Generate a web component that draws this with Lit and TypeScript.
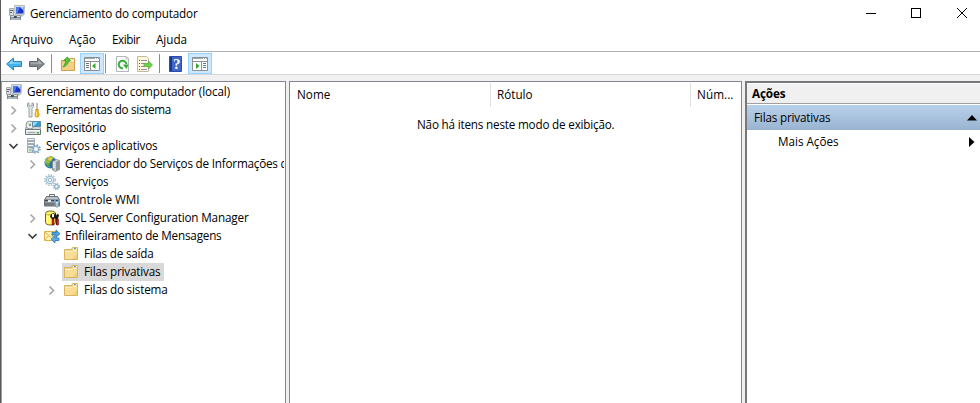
import { LitElement, html, css, svg, nothing } from "lit";
import { customElement, property } from "lit/decorators.js";

const folder = svg`<path d="M1.500 3.500h7l1-2h5v12h-13z" fill="#f4d486" stroke="#d9b360"/><path d="M10 2.500h4" stroke="#fff6dc"/><path d="M11 2.500h1" stroke="#4b94cf"/><path d="M12 2.500h1" stroke="#d98a3a"/><path d="M2 5.500h7l1-1h4V13H2z" fill="#f8dd96"/><path d="M2 5.500h7l1-1h4" stroke="#fff1c4"/><path d="M9 13l5-5v5z" fill="#f3cf7c"/>`;
const computer = svg`<path d="M5.500 .5h10l-.5 9.500H6z" fill="#d9dcde" stroke="#b3b8bc"/><path d="M7 2h7.500v6.500H7z" fill="#1b35c8"/><path d="M7 2h4L8.500 8.500H7z" fill="#4a78ee"/><path d="M11 2h3.500v3.500z" fill="#a9cbff"/><path d="M.5 3.500h4v7h-4z" fill="#dadde0" stroke="#a4aaae"/><path d="M1 5.500h3M1 7.500h2" stroke="#667"/><path d="M9 10h4l1 1.500H8z" fill="#aeb3b6"/><path d="M1 10.500h11V15H1z" fill="#7b858b"/><path d="M2 11.500h3M8 11.500h3M2 14h9" stroke="#dfe4e6"/><path d="M5 11h2.500v2H5z" fill="#344958"/>`;
const icons: Record<string, unknown> = {
  computer,
  tools: svg`<path d="M2.500 1.500v3l1.500 2v8.500h3V6.500l1.500-2v-3L7 .8V4H4V.8z" fill="#e4e7e9" stroke="#8d9599" stroke-width=".9"/><path d="M12 1v7" stroke="#999" stroke-width="2"/><path d="M12 1v6" stroke="#e8e8e8"/><path d="M10.500 7.500h3l-.5 2.500 1 1v3l-1 1h-2l-1-1v-3l1-1z" fill="#f8bb20" stroke="#cf9520" stroke-width=".8"/><path d="M11.500 10v4" stroke="#ffeb72"/>`,
  storage: svg`<path d="M.5 8l2-4h10l3 4v3H.5z" fill="#d3d7d9" stroke="#a0a6aa"/><circle cx="5" cy="5" r="4" fill="#eef0f2" stroke="#92999d"/><path d="M2 3l3 2 1-3" stroke="#bfe0a8"/><circle cx="5" cy="5" r="1.200" fill="#85999e"/><path d="M7.500 1.500h8v5h-8z" fill="#2f9fd6" stroke="#5f8ba0"/><path d="M8 2h5L9 6H8z" fill="#8fdcf8"/><path d="M.5 9.500h15v5H.500z" fill="#dfe2e3" stroke="#6f7579"/><path d="M1 10.500h14" stroke="#fff"/><path d="M3 12.500h7" stroke="#a4aaad"/><path d="M12 12h2v1.500h-2z" fill="#29bd3b"/>`,
  server: svg`<path d="M2.500 .5h7v14h-7z" fill="#d8dee2" stroke="#a5aeb3"/><path d="M3 3h6M3 6h6M3 9h5" stroke="#697b87"/><path d="M3 1.500h6M3 4.500h6M3 7.500h5" stroke="#f5f7f8"/><path d="M4 12h2" stroke="#4ac150"/><circle cx="11" cy="11" r="4" stroke="#7f9fb8" stroke-width="1.600" stroke-dasharray="1.600 1.540"/><circle cx="11" cy="11" r="2.900" fill="#dbe8f2" stroke="#82a6c2"/><circle cx="11" cy="11" r="1.200" fill="#fff"/>`,
  web: svg`<circle cx="6.500" cy="6.500" r="6" fill="#2874b6"/><path d="M1 4l3-3 4-1 2 2-3 2-1 3-3 2-2-2z" fill="#8dbd43"/><path d="M5 1l4 1-2 3-3-1z" fill="#f1c343"/><path d="M2 7l3 1 1 4-3-2z" fill="#56a83d"/><path d="M8.500 5.500l4-2 3 1v9l-4 2-3-1.500z" fill="#c8cdd0" stroke="#7b858a" stroke-width=".8"/><path d="M12 6l3-1.200v8.700l-3 1.500z" fill="#8b959b"/><path d="M9 7l2 .8M9 9l2 .8M9 11l2 .8" stroke="#f5f7f8"/><path d="M9 12.500h1.500v1H9z" fill="#45ce44"/>`,
  gears: svg`<circle cx="6" cy="6" r="5.200" stroke="#a9c0cf" stroke-width="1.600" stroke-dasharray="1.500 1.230"/><circle cx="6" cy="6" r="3.700" fill="#e3eef6" stroke="#a1bfd1" stroke-width="1.200"/><circle cx="6" cy="6" r="1.700" fill="#fff" stroke="#9cb9cb"/><circle cx="12.500" cy="12.500" r="2.800" stroke="#719ab5" stroke-width="1.300" stroke-dasharray="1.200 1"/><circle cx="12.500" cy="12.500" r="2" fill="#dceaf3" stroke="#7ca8c6"/><circle cx="12.500" cy="12.500" r=".8" fill="#fff"/>`,
  wmi: svg`<path d="M5.500 4.500V2.500h5v2" stroke="#61666c"/><path d="M.5 8l2-3.500h11l2 3.500v6H.500z" fill="#8d959c" stroke="#666e75"/><path d="M2.500 5.500h11M2 6.500h12" stroke="#bcc3c8"/><path d="M1 8.500h14" stroke="#3f474e"/><path d="M4 8h3v2H4z" fill="#e4e8ea"/><path d="M1 11h9v2.500H1z" fill="#6f7980"/><path d="M10.500 7v3l1.500 1v4h2v-4l1.500-1V7l-1 .5v2h-3v-2z" fill="#dceaf6" stroke="#6f97bf" stroke-width=".9"/>`,
  sql: svg`<path d="M1.500 3.500c0-3.300 10-3.300 10 0v9c0 3.300-10 3.300-10 0z" fill="#fff36d" stroke="#6c6315"/><path d="M2 3.500c1 2 8 2 9 0" stroke="#b4a51d"/><path d="M3.500 6v7M5.500 6v8M7.500 6v8" stroke="#fffed1"/><path d="M7 4l3-1 1 2v3l-1 1v6H8V9L6 7z" fill="#191919"/><path d="M8.500 4v3h1V4" stroke="#f5f5f5"/><path d="M12 2.500v3l2-2 1 2-1 3v6h-2V9l-2-2 1-3z" fill="#181818"/><path d="M8 9h2v6H8zM12.500 9h2v6h-2z" fill="#e32218" stroke="#500" stroke-width=".5"/>`,
  queue: svg`<path d="M.5 3.500h12v9H.500z" fill="#fff1ae" stroke="#e0b249"/><path d="M1 4l5.500 5L12 4M1 12l3.500-4.500M12 12L8.500 7.500" stroke="#ddb25a"/><path d="M8 4.500h4V2l4 3.700-4 3.500V7H8z" fill="#4ba3e4" stroke="#2674b1" stroke-width=".8"/><path d="M15 10h-4V7.500L7 11.200 11 15v-2.500h4z" fill="#5cb0ea" stroke="#2674b1" stroke-width=".8"/>`,
  folder,
  back: svg`<path d="M.6 8L7.500 2v3.500h8v5h-8V14z" fill="#45b3ec" stroke="#2a86bf"/><path d="M2.500 7.700L6.500 4.200v2.300h8v1z" fill="#9cdcf9"/>`,
  forward: svg`<path d="M15.400 8L8.500 2v3.500h-8v5h8V14z" fill="#85898c" stroke="#606467"/><path d="M13.500 7.700L9.500 4.200v2.300h-8v1z" fill="#b7babc"/>`,
  up: svg`<path d="M1.500 4.500h7l1-2h5v12h-13z" fill="#efc873" stroke="#cf9f50"/><path d="M10 3.500h4v2h-4z" fill="#fff3d3"/><path d="M2 6.500h12v7.500H2z" fill="#f3d083"/><path d="M3 11c3.500-1 5-3 5.500-6h2L7.500 1 3.500 4.500h2.300c-.3 2.500-1.300 4.500-2.800 6.500z" fill="#53c637" stroke="#3b9b2f" stroke-width=".8"/>`,
  leftPane: svg`<path d="M.5 1.500h15v13H.5z" fill="#fff" stroke="#8b8f92"/><path d="M1 2.500h14" stroke="#a3a7aa"/><path d="M1 5.500h14" stroke="#8b8f92"/><path d="M11 2.500h1M13 2.500h1" stroke="#fff"/><path d="M6.500 6v8" stroke="#8b8f92"/><path d="M2 7.500h3M2 9.500h3M2 11.500h3" stroke="#6d7275"/><path d="M11.500 7v6L8 10z" fill="#36a927"/>`,
  rightPane: svg`<path d="M.5 1.500h15v13H.5z" fill="#fff" stroke="#8b8f92"/><path d="M1 2.500h14" stroke="#a3a7aa"/><path d="M1 5.500h14" stroke="#8b8f92"/><path d="M11 2.500h1M13 2.500h1" stroke="#fff"/><path d="M9.500 6v8" stroke="#8b8f92"/><path d="M11 7.500h3M11 9.500h3M11 11.500h3" stroke="#4f7fb0"/><path d="M4 7v6l3.500-3z" fill="#36a927"/>`,
  refresh: svg`<path d="M1.500 .5h10l2 2v13h-12z" fill="#fcfcfc" stroke="#b5b8ba"/><path d="M11 1v2h3" stroke="#bbb"/><path d="M8 12.200A3.800 3.800 0 1 1 11.300 8" stroke="#35ae37" stroke-width="2"/><path d="M8 8.500h5.500l-2 4.500z" fill="#35a62c"/>`,
  exportList: svg`<path d="M.5 .5h9l2 2v13H.500z" fill="#fff8db" stroke="#c0b8a2"/><path d="M2 4.500h1M2 7.500h1M2 10.500h1M2 13.500h1" stroke="#555"/><path d="M4 4.500h6M4 7.500h3M4 10.500h3M4 13.500h6" stroke="#948cb8"/><path d="M7 7.500h4.500V5l4 4-4 4v-2.500H7z" fill="#6bd04e" stroke="#4da93b" stroke-width=".7"/>`,
  help: svg`<path d="M1.500 .5h12v15h-12z" fill="#3f66cc" stroke="#2d4ba0"/><path d="M2 1h2v14H2z" fill="#1d378d"/><text x="8.700" y="13" text-anchor="middle" font-family="Liberation Serif, serif" font-size="15" font-weight="bold" fill="#fff">?</text>`,
};

@customElement("ui-icon")
class UiIcon extends LitElement {
  static styles = css`
    :host { display: block; width: 16px; height: 16px; flex: none; }
    svg { display: block; }
  `;
  @property() name = "";
  render() {
    return html`<svg width="16" height="16" viewBox="0 0 16 16" fill="none">${icons[this.name]}</svg>`;
  }
}

/* A single-line label whose tracking is computed to occupy its nominal width. */
@customElement("ui-label")
class UiLabel extends LitElement {
  static styles = css`
    :host { display: block; flex: none; white-space: nowrap; height: 18px; line-height: 16px; }
    .text { display: inline-block; vertical-align: top; }
  `;
  @property() text = "";
  @property({ type: Number }) span = 0;
  firstUpdated() {
    this.fit();
    document.fonts.ready.then(() => this.fit());
  }
  fit() {
    const el = this.renderRoot.querySelector<HTMLElement>(".text")!;
    el.style.letterSpacing = "0px";
    const natural = el.getBoundingClientRect().width;
    el.style.letterSpacing = `${(this.span - natural) / this.text.length}px`;
  }
  render() {
    return html`<span class="text">${this.text}</span>`;
  }
}

interface Node { level: number; icon: string; text: string; span: number; state?: "open" | "closed"; selected?: boolean; }
const nodes: Node[] = [
  { level: 0, icon: "computer", text: "Gerenciamento do computador (local)", span: 203 },
  { level: 1, icon: "tools", text: "Ferramentas do sistema", span: 125, state: "closed" },
  { level: 1, icon: "storage", text: "Repositório", span: 60, state: "closed" },
  { level: 1, icon: "server", text: "Serviços e aplicativos", span: 111.500, state: "open" },
  { level: 2, icon: "web", text: "Gerenciador do Serviços de Informações d", span: 222.500, state: "closed" },
  { level: 2, icon: "gears", text: "Serviços", span: 43.500 },
  { level: 2, icon: "wmi", text: "Controle WMI", span: 74.500 },
  { level: 2, icon: "sql", text: "SQL Server Configuration Manager", span: 183.500, state: "closed" },
  { level: 2, icon: "queue", text: "Enfileiramento de Mensagens", span: 156.500, state: "open" },
  { level: 3, icon: "folder", text: "Filas de saída", span: 69.500 },
  { level: 3, icon: "folder", text: "Filas privativas", span: 76.500, selected: true },
  { level: 3, icon: "folder", text: "Filas do sistema", span: 83.500, state: "closed" },
];

@customElement("app-root")
class AppRoot extends LitElement {
  static styles = css`
    :host { display: block; width: 980px; height: 403px; overflow: hidden; font: 11.7px "Open Sans", "Noto Sans", sans-serif; color: #000; }
    * { box-sizing: border-box; }
    .window { height: 403px; display: flex; flex-direction: column; background: #f0f0f0; border-left: 1px solid #5b5b5f; }
    .title { height: 28px; background: #fff; display: flex; align-items: center; padding-left: 8px; flex: none; }
    .title ui-label { margin-left: 5px; }
    .title ui-icon { margin-top: -2px; }
    .controls { margin-left: auto; }
    .menu { height: 23px; background: #fff; display: flex; align-items: center; gap: 16px; padding: 1px 10px 0; flex: none; }
    .toolbar { height: 24px; border-top: 1px solid #b0b2b8; border-bottom: 1px solid #d7d7d7; background: #fff; display: flex; align-items: center; padding: 1px 0 0 5px; flex: none; }
    .toolbar .fwd { margin-left: 7px; }
    .sep { width: 1px; height: 19px; background: #8d8d8d; flex: none; }
    .a { margin: 0 8px 0 6px; }
    .b { margin: 0 9px 0 1px; }
    .c { margin: 0 8px 0 6px; }
    .on { width: 24px; height: 21px; margin-left: 4px; border: 1px solid #99d1ff; background: #cce8ff; display: grid; place-items: center; }
    .exp { margin-left: 6px; }
    .panes { flex: 1; min-height: 0; margin-top: 6px; display: grid; grid-template-columns: 285px 453px 1fr; column-gap: 3px; }
    .tree, .list { background: #fff; border: 1px solid #828790; border-bottom: 0; min-width: 0; overflow: hidden; }
    .tree { border-left-color: #999da4; padding: 1px 1px 0 0; }
    .node { display: flex; height: 18px; align-items: center; overflow: hidden; }
    .l0 { padding-left: 4px; } .l1 { padding-left: 4px; } .l2 { padding-left: 23px; } .l3 { padding-left: 42px; }
    .twist { width: 15px; height: 16px; flex: none; margin-right: 4px; }
    .item { display: flex; height: 18px; align-items: center; padding-right: 3px; }
    .l3 .item { margin-left: -1px; padding-left: 1px; }
    .item ui-label { margin-left: 5px; }
    .selected { background: #d9d9d9; }
    .head { height: 26px; padding-top: 1px; display: grid; grid-template-columns: 201px 200px 1fr; }
    .col { height: 24px; padding: 3px 0 0 6px; border-right: 1px solid #e2e2e2; }
    .col:first-child { padding-left: 7px; }
    .col:last-child { border: 0; }
    .empty { margin: 8px 0 0 127px; }
    .actions { background: #fff; border-left: 2px solid #77787b; border-top: 2px solid #77787b; min-width: 0; }
    .ahead { height: 21px; background: #f0f0f0; border-top: 1px solid #fff; border-bottom: 1px solid #a0a0a0; font-weight: bold; padding: 1px 0 0 5px; }
    .group { margin-top: 1px; height: 25px; background: linear-gradient(#b9d1ea, #99b4d1); display: flex; align-items: center; justify-content: space-between; padding: 0 3px 0 7px; }
    .more { height: 23px; display: flex; align-items: center; justify-content: space-between; padding: 0 5px 0 31px; }
    svg { display: block; flex: none; }
  `;
  node(n: Node) {
    return html`<div class="node l${n.level}">
      ${n.level ? html`<svg class="twist" viewBox="0 0 15 16">${n.state === "closed"
        ? svg`<path d="M5.500 4.500l4 4-4 4" fill="none" stroke="#a6a6a6" stroke-width="1.600"/>`
        : n.state === "open" ? svg`<path d="M3.500 6l4 4 4-4" fill="none" stroke="#404040" stroke-width="1.700"/>` : nothing}</svg>` : nothing}
      <div class="item ${n.selected ? "selected" : ""}"><ui-icon name=${n.icon}></ui-icon><ui-label text=${n.text} span=${n.span}></ui-label></div>
    </div>`;
  }
  render() {
    return html`<div class="window">
      <div class="title"><ui-icon name="computer"></ui-icon><ui-label text="Gerenciamento do computador" span="167.500"></ui-label>
        <svg class="controls" width="114" height="28" viewBox="0 0 114 28" fill="none" stroke="#000" shape-rendering="crispEdges"><path d="M0 13.500h10M45.500 8.500h9v9h-9z"/><path d="M91 8l10 10M101 8L91 18" shape-rendering="auto"/></svg>
      </div>
      <div class="menu"><ui-label text="Arquivo" span="42"></ui-label><ui-label text="Ação" span="27"></ui-label><ui-label text="Exibir" span="28"></ui-label><ui-label text="Ajuda" span="31"></ui-label></div>
      <div class="toolbar">
        <ui-icon name="back"></ui-icon><ui-icon class="fwd" name="forward"></ui-icon>
        <div class="sep a"></div><ui-icon name="up"></ui-icon><div class="on"><ui-icon name="leftPane"></ui-icon></div>
        <div class="sep b"></div><ui-icon name="refresh"></ui-icon><ui-icon class="exp" name="exportList"></ui-icon>
        <div class="sep c"></div><ui-icon name="help"></ui-icon><div class="on"><ui-icon name="rightPane"></ui-icon></div>
      </div>
      <div class="panes">
        <div class="tree">${nodes.map((n) => this.node(n))}</div>
        <div class="list">
          <div class="head"><div class="col"><ui-label text="Nome" span="33.500"></ui-label></div><div class="col"><ui-label text="Rótulo" span="35.500"></ui-label></div><div class="col"><ui-label text="Núm..." span="36.500"></ui-label></div></div>
          <ui-label class="empty" text="Não há itens neste modo de exibição." span="197.500"></ui-label>
        </div>
        <div class="actions">
          <div class="ahead"><ui-label text="Ações" span="33.500"></ui-label></div>
          <div class="group"><ui-label text="Filas privativas" span="76.500"></ui-label><svg width="10" height="6" viewBox="0 0 10 6"><path d="M5 0l5 5.500H0z"/></svg></div>
          <div class="more"><ui-label text="Mais Ações" span="60.500"></ui-label><svg width="6" height="10" viewBox="0 0 6 10"><path d="M0 0l5.500 5L0 10z"/></svg></div>
        </div>
      </div>
    </div>`;
  }
}
